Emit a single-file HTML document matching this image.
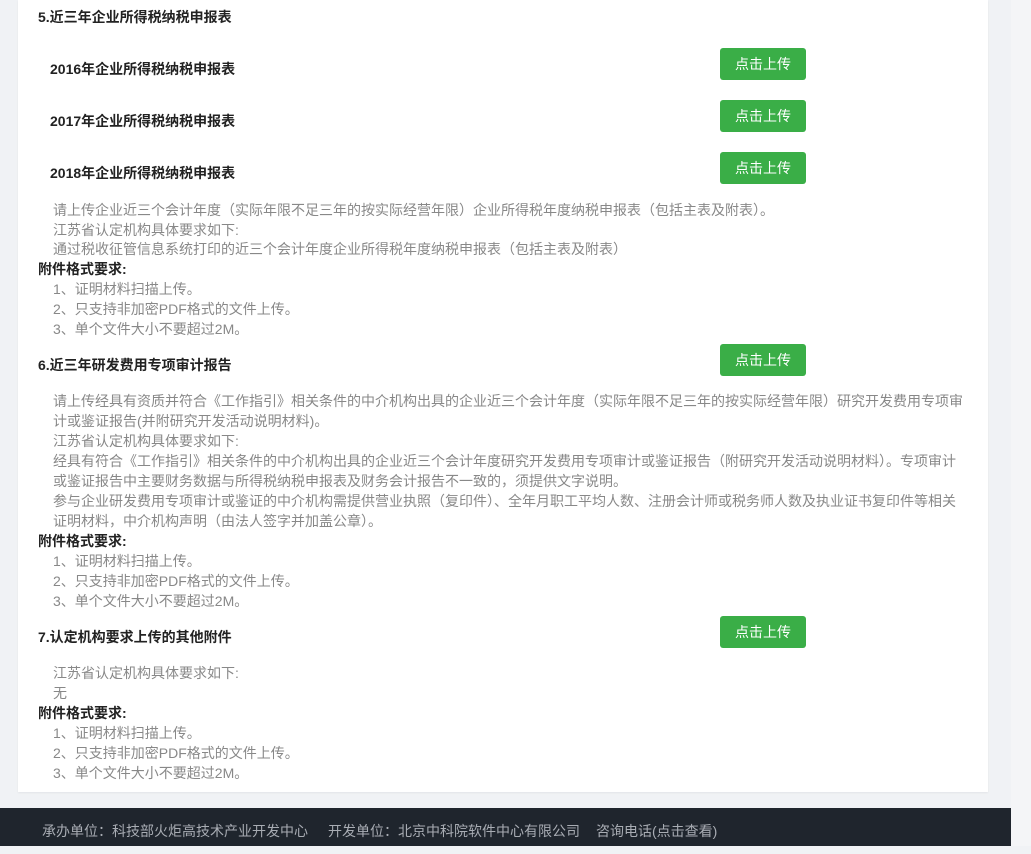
<!DOCTYPE html>
<html><head><meta charset="utf-8"><style>
body{margin:0;width:1031px;height:846px;background:#f0f2f5;position:relative;overflow:hidden;font-family:"Liberation Sans","Noto Sans CJK SC",sans-serif;font-size:14px}
.card{position:absolute;left:18px;top:0;width:970px;height:792px;background:#fff;box-shadow:0 1px 2px rgba(0,0,0,.06)}
.l{position:absolute;white-space:nowrap;line-height:20px}
.h{left:38px;font-weight:bold;color:#222}
.s{left:50px;font-weight:bold;color:#222}
.g{left:53px;color:#888}
.b{position:absolute;left:720px;width:86px;height:32px;background:#3aae47;border-radius:3px;color:#fff;text-align:center;line-height:32px;font-size:14px}
.foot{position:absolute;left:0;top:808px;width:1011px;height:38px;background:#1f252d;color:#a8acb3;line-height:46px;font-size:14px}
.sb{position:absolute;left:1011px;top:0;width:20px;height:846px;background:#f4f5f7}
</style></head><body>
<div class="card"></div>
<div class="l h" style="top:7px">5.近三年企业所得税纳税申报表</div>
<div class="l s" style="top:59px">2016年企业所得税纳税申报表</div><div class="b" style="top:48px">点击上传</div>
<div class="l s" style="top:111px">2017年企业所得税纳税申报表</div><div class="b" style="top:100px">点击上传</div>
<div class="l s" style="top:163px">2018年企业所得税纳税申报表</div><div class="b" style="top:152px">点击上传</div>
<div class="l g" style="top:200px">请上传企业近三个会计年度（实际年限不足三年的按实际经营年限）企业所得税年度纳税申报表（包括主表及附表）。</div>
<div class="l g" style="top:220px">江苏省认定机构具体要求如下:</div>
<div class="l g" style="top:239px">通过税收征管信息系统打印的近三个会计年度企业所得税年度纳税申报表（包括主表及附表）</div>
<div class="l h" style="top:259px">附件格式要求:</div>
<div class="l g" style="top:279px">1、证明材料扫描上传。</div>
<div class="l g" style="top:299px">2、只支持非加密PDF格式的文件上传。</div>
<div class="l g" style="top:319px">3、单个文件大小不要超过2M。</div>
<div class="l h" style="top:355px">6.近三年研发费用专项审计报告</div><div class="b" style="top:344px">点击上传</div>
<div class="l g" style="top:391px">请上传经具有资质并符合《工作指引》相关条件的中介机构出具的企业近三个会计年度（实际年限不足三年的按实际经营年限）研究开发费用专项审</div>
<div class="l g" style="top:411px">计或鉴证报告(并附研究开发活动说明材料)。</div>
<div class="l g" style="top:431px">江苏省认定机构具体要求如下:</div>
<div class="l g" style="top:451px">经具有符合《工作指引》相关条件的中介机构出具的企业近三个会计年度研究开发费用专项审计或鉴证报告（附研究开发活动说明材料）。专项审计</div>
<div class="l g" style="top:471px">或鉴证报告中主要财务数据与所得税纳税申报表及财务会计报告不一致的，须提供文字说明。</div>
<div class="l g" style="top:491px">参与企业研发费用专项审计或鉴证的中介机构需提供营业执照（复印件）、全年月职工平均人数、注册会计师或税务师人数及执业证书复印件等相关</div>
<div class="l g" style="top:511px">证明材料，中介机构声明（由法人签字并加盖公章）。</div>
<div class="l h" style="top:531px">附件格式要求:</div>
<div class="l g" style="top:551px">1、证明材料扫描上传。</div>
<div class="l g" style="top:571px">2、只支持非加密PDF格式的文件上传。</div>
<div class="l g" style="top:591px">3、单个文件大小不要超过2M。</div>
<div class="l h" style="top:627px">7.认定机构要求上传的其他附件</div><div class="b" style="top:616px">点击上传</div>
<div class="l g" style="top:663px">江苏省认定机构具体要求如下:</div>
<div class="l g" style="top:683px">无</div>
<div class="l h" style="top:703px">附件格式要求:</div>
<div class="l g" style="top:723px">1、证明材料扫描上传。</div>
<div class="l g" style="top:743px">2、只支持非加密PDF格式的文件上传。</div>
<div class="l g" style="top:763px">3、单个文件大小不要超过2M。</div>
<div class="foot"><span style="margin-left:42px">承办单位：科技部火炬高技术产业开发中心</span><span style="margin-left:20px">开发单位：北京中科院软件中心有限公司</span><span style="margin-left:16px">咨询电话(点击查看)</span></div>
<div class="sb"></div>
</body></html>
